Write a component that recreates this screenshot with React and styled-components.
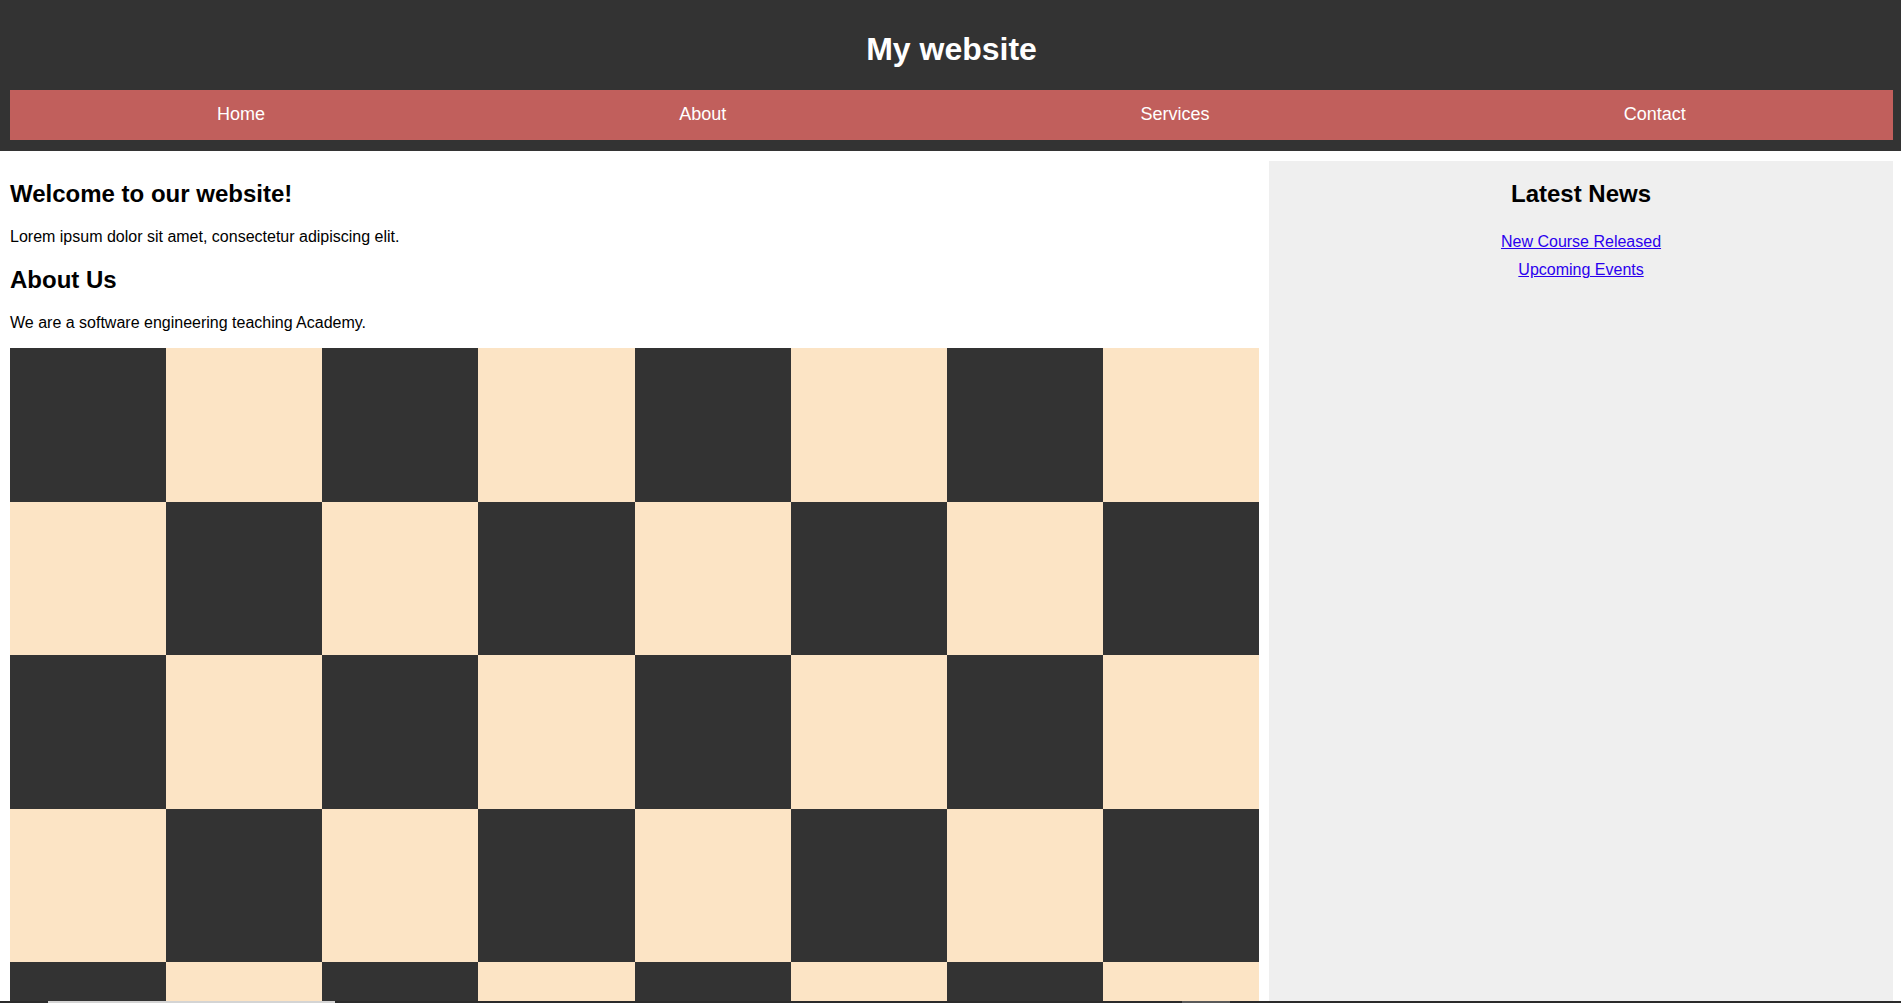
import React from 'react';
import styled, { createGlobalStyle } from 'styled-components';

const GlobalStyle = createGlobalStyle`
	html {
		scrollbar-width: none;
	}
	html::-webkit-scrollbar {
		display: none;
	}
	body {
		margin: 0;
		font-family: 'Liberation Sans', Arial, sans-serif;
		font-size: 16px;
		color: #000;
		background: #fff;
	}
`;

const navLinks = ['Home', 'About', 'Services', 'Contact'];
const news = ['New Course Released', 'Upcoming Events'];

const App = () => (
	<>
		<GlobalStyle />
		<Header>
			<Title>My website</Title>
			<Nav>
				<NavList>
					{navLinks.map(link => (
						<NavItem key={link}>{link}</NavItem>
					))}
				</NavList>
			</Nav>
		</Header>
		<Main>
			<Content>
				<Heading>Welcome to our website!</Heading>
				<Text>Lorem ipsum dolor sit amet, consectetur adipiscing elit.</Text>
				<Heading>About Us</Heading>
				<Text>We are a software engineering teaching Academy.</Text>
				<Board>
					{Array.from({ length: 64 }, (_, i) => (
						<Square key={i} dark={(Math.floor(i / 8) + (i % 8)) % 2 === 0} />
					))}
				</Board>
			</Content>
			<Sidebar>
				<Heading>Latest News</Heading>
				<NewsList>
					{news.map(item => (
						<NewsItem key={item}>
							<NewsLink href='#'>{item}</NewsLink>
						</NewsItem>
					))}
				</NewsList>
			</Sidebar>
		</Main>
		<BottomBar>
			<Thumb />
			<Marker />
		</BottomBar>
	</>
);

export default App;

const Header = styled.header`
	background: #333;
	padding: 10px 8px 11px 10px;
	color: #fff;
`;

const Title = styled.h1`
	margin: 21px 0 22px;
	font-size: 32px;
	font-weight: bold;
	text-align: center;
`;

const Nav = styled.nav`
	background: #c15f5c;
`;

const NavList = styled.ul`
	display: flex;
	justify-content: space-around;
	list-style: none;
	margin: 0;
	padding: 0;
`;

const NavItem = styled.li`
	padding: 14px 0;
	font-size: 18px;
	line-height: 21.5px;
	color: #fff;
`;

const Main = styled.main`
	display: grid;
	grid-template-columns: 67.04% 1fr;
	margin-top: 10px;
	padding-right: 8px;
`;

const Content = styled.section`
	padding: 0 10px;
	min-width: 0;
`;

const Heading = styled.h2`
	font-size: 24px;
	font-weight: bold;
	margin: 19.92px 0;
`;

const Text = styled.p`
	margin: 16px 0;
`;

const Board = styled.div`
	display: grid;
	grid-template-columns: repeat(8, 1fr);
	grid-auto-rows: 153.5px;
`;

const Square = styled.div`
	background: ${props => (props.dark ? '#333' : '#fce4c5')};
`;

const Sidebar = styled.aside`
	background: #efefef;
	text-align: center;
	padding: 0 10px;
`;

const NewsList = styled.ul`
	list-style: none;
	margin: 0;
	padding: 0;
`;

const NewsItem = styled.li`
	padding: 5px 0;
`;

const NewsLink = styled.a`
	color: #2a00ee;
	text-decoration: underline;
`;

const BottomBar = styled.div`
	position: fixed;
	left: 0;
	right: 0;
	bottom: 0;
	height: 2px;
	background: #2b2b2b;
`;

const Thumb = styled.div`
	position: absolute;
	left: 48px;
	top: 0;
	width: 287px;
	height: 2px;
	background: #d4d4d4;
`;

const Marker = styled.div`
	position: absolute;
	left: 1182px;
	top: 0;
	width: 48px;
	height: 2px;
	background: #5a5a5a;
`;
